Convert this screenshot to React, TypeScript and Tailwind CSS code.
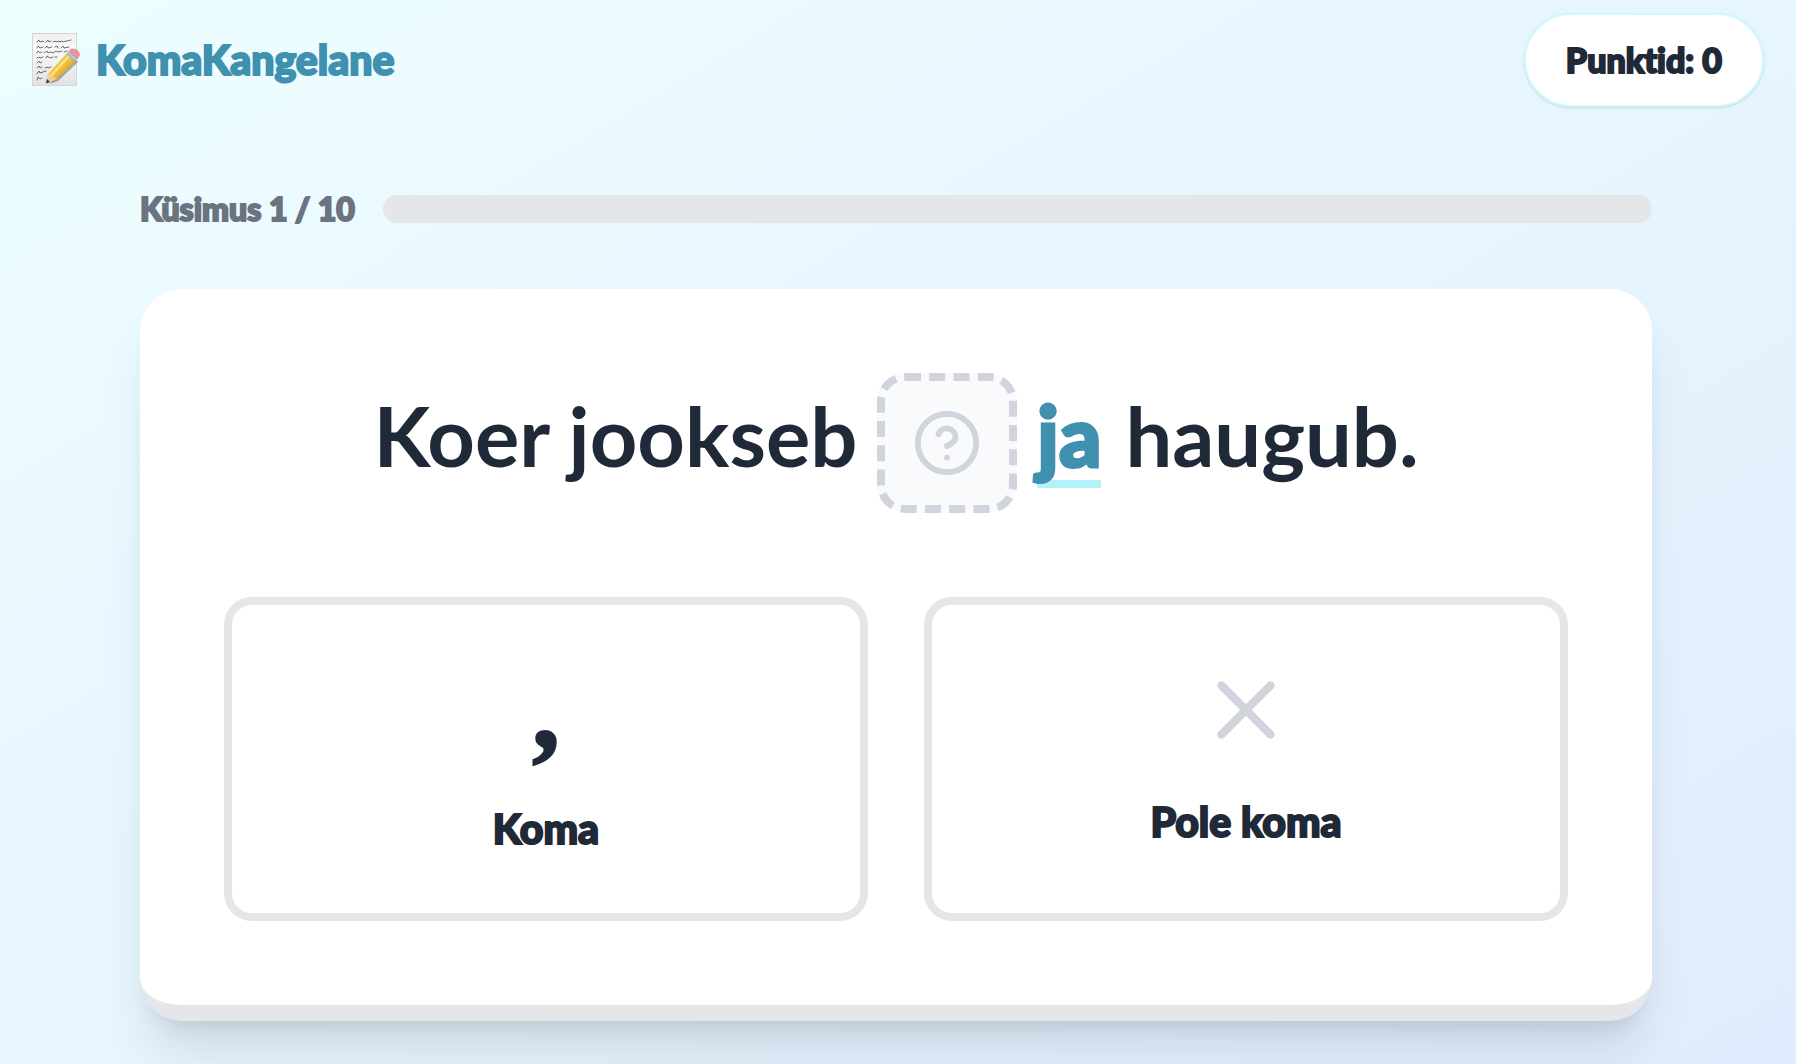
import { useState } from 'react'
import { CircleHelp, X } from 'lucide-react'

const TOTAL_QUESTIONS = 10

const question = {
  before: 'Koer jookseb',
  keyword: 'ja',
  after: 'haugub.'
}

function MemoIcon() {
  return (
    <svg viewBox="0 0 48 54" className="w-12 h-[54px] shrink-0" aria-hidden="true">
      <defs>
        <linearGradient id="paper" x1="0" y1="0" x2="0" y2="1">
          <stop offset="0" stopColor="#efefef" />
          <stop offset="0.3" stopColor="#fafafa" />
          <stop offset="1" stopColor="#e2e2e4" />
        </linearGradient>
        <linearGradient id="pencil" x1="0" y1="0" x2="1" y2="1">
          <stop offset="0" stopColor="#fbe27a" />
          <stop offset="0.5" stopColor="#f0c03a" />
          <stop offset="1" stopColor="#a87612" />
        </linearGradient>
      </defs>
      <rect x="0.5" y="0.5" width="44" height="52" fill="url(#paper)" stroke="#d3d5d8" />
      <g fill="none" stroke="#4a4a4a" strokeWidth="0.8" strokeLinecap="round">
        <path d="M5 9l2-2 1 2 3-1 1 1M14 9l2-2 1 2 2-1M21 9l2-1 1 1 3-1 1 1 2-1 1 1 3-1 1 0 4-1" />
        <path d="M5 15l1-2 2 2 3-1M13 15l2-2 1 2 4-1M23 14l2-1 1 2M29 15l2-2 1 2 5-1" />
        <path d="M5 20l1-2 2 2 2-1M12 20l3-2 1 2 3-1 2 1 3-2 2 1 4-1M32 19l3-1" />
        <path d="M5 25l2-1 1 1 3-1M14 25l1-2 3 2 3-1M23 24l2 0" />
        <path d="M5 30l2-2 1 2 2-1" />
        <path d="M5 35l2-2 1 2 2-1M13 35l2-1 1 1 3-1" />
        <path d="M5 41l2-3 1 2 3-1 3-1M5 47l1-3 2 2 2-1" />
      </g>
      <path d="M17 51L26 48L46 29L43 25z" fill="#000" opacity="0.3" />
      <path d="M16 41L34 21l9 8-18 17-11 4z" fill="url(#pencil)" />
      <path d="M19 43L37 23" stroke="#fbe58a" strokeWidth="2" />
      <path d="M16 41l9 5-11 4z" fill="#ecd096" />
      <path d="M15 46l3 3-4 1.500z" fill="#39352f" />
      <path d="M34 21l3-3 9 7-3 4z" fill="#a9b0b8" />
      <path d="M35.500 19.500l9 7.500" stroke="#dce1e6" />
      <path d="M37 18c2-6 13 0 10.500 5L46 26z" fill="#ee9296" />
    </svg>
  )
}

export default function App() {
  const [score] = useState(0)
  const [current] = useState(0)

  return (
    <div className="min-h-screen bg-gradient-to-br from-[#edfeff] to-[#e0ecfd] font-['Lato','Noto_Sans',sans-serif] text-[#1f2937] [font-variant-ligatures:none]">
      <header className="flex items-center justify-between px-8 pt-[13px]">
        <div className="flex items-center gap-4">
          <MemoIcon />
          <h1 className="text-[41px] leading-[56px] font-black text-[#4090b0] [-webkit-text-stroke:2px]">
            KomaKangelane
          </h1>
        </div>
        <div className="rounded-full border-2 border-cyan-100 bg-white px-10 py-5 text-[34px] leading-[50px] font-black shadow-sm [-webkit-text-stroke:2px]">
          Punktid: {score}
        </div>
      </header>

      <main className="mx-auto max-w-[1516px] pr-1 pt-20 pb-10">
        <div className="flex items-center gap-7">
          <span className="text-[32px] leading-[44px] font-black text-[#6b7280] [-webkit-text-stroke:2px]">
            Küsimus {current + 1} / {TOTAL_QUESTIONS}
          </span>
          <div className="h-7 flex-1 overflow-hidden rounded-full bg-[#e5e6ea]">
            <div className="h-full bg-[#4090b0]" style={{ width: `${(current / TOTAL_QUESTIONS) * 100}%` }} />
          </div>
        </div>

        <section className="mt-[58px] rounded-[42px] border-b-16 border-[#e5e6ea] bg-white p-[84px] shadow-[0_40px_50px_-10px_rgba(0,0,0,0.1),0_16px_20px_-12px_rgba(0,0,0,0.1)]">
          <div className="flex items-center justify-center text-[83px] leading-[90px] font-bold">
            <span className="pb-4">{question.before}</span>
            <span className="mx-5 flex size-[140px] items-center justify-center rounded-[28px] border-8 border-dashed border-[#d1d4dc] bg-[#f9fafc] text-[#d1d4dc]">
              <CircleHelp size={70} />
            </span>
            <span className="mb-2 border-b-8 border-[#b5f1f9] font-black text-[#4090b0] [-webkit-text-stroke:3px]">
              {question.keyword}
            </span>
            <span className="ml-6 pb-4">{question.after}</span>
          </div>

          <div className="mt-[84px] grid grid-cols-2 gap-14">
            <button className="flex h-[324px] flex-col items-center justify-center gap-7 rounded-[28px] border-8 border-[#e5e6ea] bg-white">
              <span className="font-['Liberation_Serif',serif] text-[112px] leading-[112px] font-bold [-webkit-text-stroke:2px]">,</span>
              <span className="text-[41px] leading-[70px] font-black [-webkit-text-stroke:2px]">Koma</span>
            </button>
            <button className="flex h-[324px] flex-col items-center justify-center gap-7 rounded-[28px] border-8 border-[#e5e6ea] bg-white">
              <X size={98} className="text-[#d1d4dc]" />
              <span className="text-[41px] leading-[70px] font-black [-webkit-text-stroke:2px]">Pole koma</span>
            </button>
          </div>
        </section>
      </main>
    </div>
  )
}
